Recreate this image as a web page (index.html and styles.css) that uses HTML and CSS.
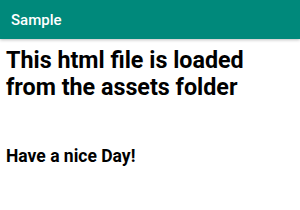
FILE: index.html
```html
<!DOCTYPE html>
<html lang="en">

<head>
    <title>Sample</title>
    <meta charset="utf-8">
    <meta name="viewport" content="width=device-width, initial-scale=1.0">
    <link rel="stylesheet" href="styles.css">
</head>

<body>

    <header class="toolbar">
        <h1>Sample</h1>
    </header>

    <main class="indhold">
        <h2>This html file is loaded from the assets folder</h2>
        <p>Have a nice Day!</p>
    </main>

</body>

</html>
```

FILE: styles.css
```css
body {
    margin: 0;
    background-color: #ffffff;
    font-family: Roboto, "Noto Sans", sans-serif;
    color: #000000;
}

.toolbar {
    height: 39px;
    background-color: #00897b;
    display: flex;
    align-items: center;
    padding: 0 11px;
    box-shadow: 0 1px 3px rgba(0, 0, 0, 0.25);
}

.toolbar h1 {
    margin: 0;
    font-size: 15px;
    font-weight: 500;
    color: #ffffff;
}

.indhold {
    padding: 0 6px;
}

.indhold h2 {
    margin: 8px 0 0 0;
    font-size: 23.3px;
    line-height: 27px;
    font-weight: bold;
}

.indhold p {
    margin: 45px 0 0 0;
    font-size: 17.5px;
    font-weight: bold;
}
```
